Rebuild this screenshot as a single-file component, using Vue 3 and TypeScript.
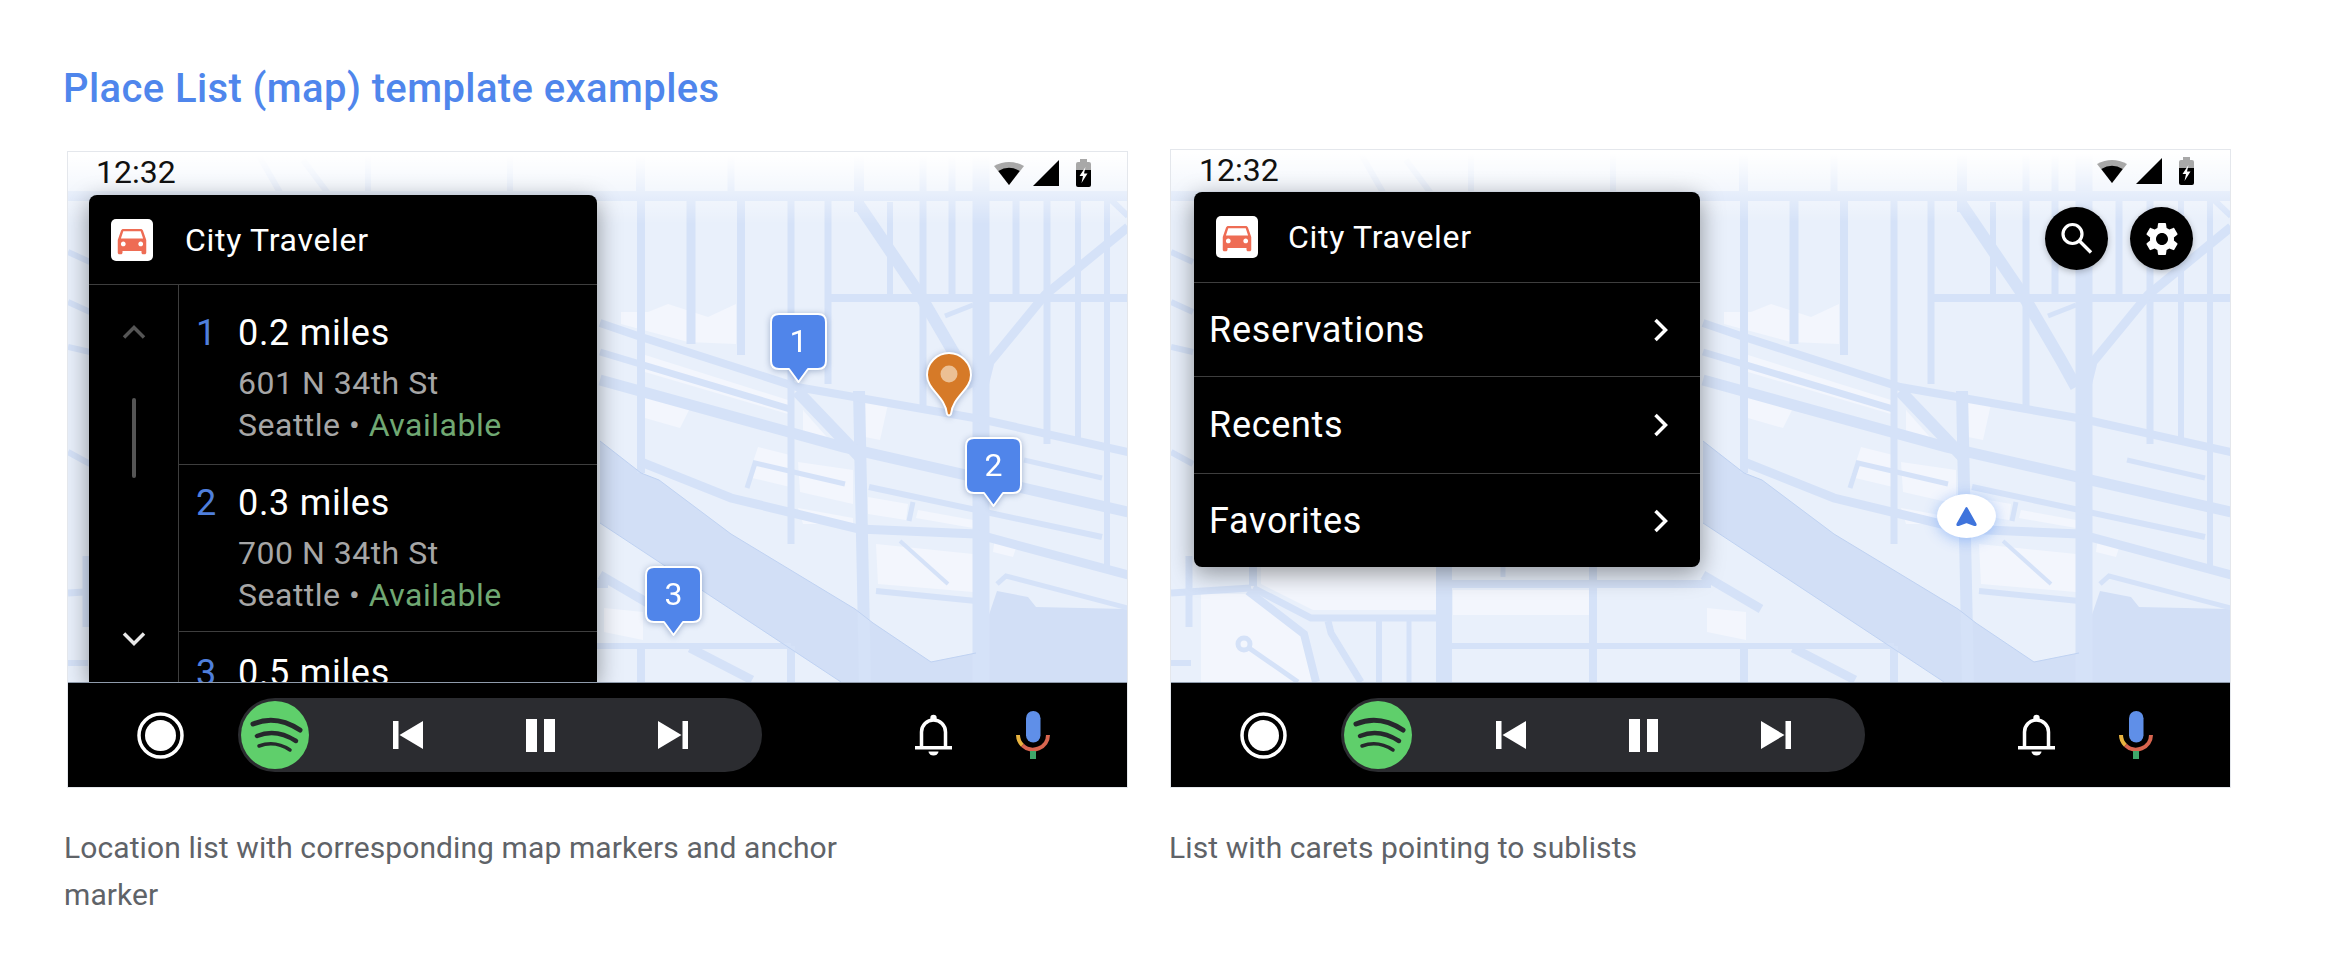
<script setup lang="ts">
interface Road {
  d: string
  w: number
}
interface Place {
  n: number
  dist: string
  addr: string
}
interface Marker {
  n: number
  x: number
  y: number
}

const GEAR =
  'M19.14 12.94c.04-.3.06-.61.06-.94 0-.32-.02-.64-.07-.94l2.03-1.58c.18-.14.23-.41.12-.61l-1.92-3.32c-.12-.22-.37-.29-.59-.22l-2.39.96c-.5-.38-1.03-.7-1.62-.94l-.36-2.54c-.04-.24-.24-.41-.48-.41h-3.84c-.24 0-.43.17-.47.41l-.36 2.54c-.59.24-1.13.57-1.62.94l-2.39-.96c-.22-.08-.47 0-.59.22L2.74 8.87c-.12.21-.08.47.12.61l2.03 1.58c-.05.3-.09.63-.09.94s.02.64.07.94l-2.03 1.58c-.18.14-.23.41-.12.61l1.92 3.32c.12.22.37.29.59.22l2.39-.96c.5.38 1.03.7 1.62.94l.36 2.54c.05.24.24.41.48.41h3.84c.24 0 .44-.17.47-.41l.36-2.54c.59-.24 1.13-.56 1.62-.94l2.39.96c.22.08.47 0 .59-.22l1.92-3.32c.12-.22.07-.47-.12-.61l-2.01-1.58zM12 15.6c-1.98 0-3.6-1.62-3.6-3.6s1.62-3.6 3.6-3.6 3.6 1.62 3.6 3.6-1.62 3.6-3.6 3.6z'
const CAR =
  'M18.92 6.01C18.72 5.42 18.16 5 17.5 5h-11c-.66 0-1.21.42-1.42 1.01L3 12v8c0 .55.45 1 1 1h1c.55 0 1-.45 1-1v-1h12v1c0 .55.45 1 1 1h1c.55 0 1-.45 1-1v-8l-2.08-5.99zM6.5 16c-.83 0-1.5-.67-1.5-1.5S5.67 13 6.5 13s1.5.67 1.5 1.5S7.33 16 6.5 16zm11 0c-.83 0-1.5-.67-1.5-1.5s.67-1.5 1.5-1.5 1.5.67 1.5 1.5-.67 1.5-1.5 1.5zM5 11l1.5-4.5h11L19 11H5z'

// map coordinates are screen pixels, the same map sits behind both screens
const water =
  '532,289 573,321 591,328 663,382 787,457 805,471 863,510 908,501 929,439 960,445 968,455 1060,457 1060,530 773,530 532,371'

const blocks = [
  '553,160 580,160 600,152 640,165 668,152 668,192 620,190 553,172',
  '577,203 720,248 720,262 577,220',
  '577,236 625,250 612,276 577,266',
  '735,258 765,292 735,285',
  '690,295 722,303 722,335 680,325',
  '730,310 785,318 785,352 732,340',
  '730,356 785,366 785,372 735,372',
  '808,392 905,402 905,440 810,432',
  '800,345 840,352 838,368 800,362',
  '850,358 905,368 905,376 848,366',
  '927,385 950,390 945,405 925,400',
  '797,248 820,252 812,288 797,285',
  '30,442 76,442 133,482 145,530 30,530',
  '90,415 265,415 265,458 142,458 90,432',
  '282,438 418,438 418,463 282,463',
  '536,456 575,460 575,488 536,480',
]

const roads: Road[] = [
  // verticals
  { d: 'M573 0V321', w: 8 },
  { d: 'M573 494V530', w: 8 },
  { d: 'M623 44V192', w: 9 },
  { d: 'M673 44V203', w: 8 },
  { d: 'M663 0V44', w: 7 },
  { d: 'M723 44V392', w: 7 },
  { d: 'M723 494V530', w: 8 },
  { d: 'M760 44V232', w: 7 },
  { d: 'M791 0V60', w: 10 },
  { d: 'M791 239L797 530', w: 12 },
  { d: 'M822 50V150', w: 6 },
  { d: 'M855 0V143M855 153V254', w: 7 },
  { d: 'M884 0V143', w: 7 },
  { d: 'M913 0V530', w: 17 },
  { d: 'M948 44V146', w: 7 },
  { d: 'M979 44V292', w: 7 },
  { d: 'M1010 44V289', w: 6 },
  { d: 'M1039 44V414', w: 6 },
  { d: 'M442 0V44M571 0V44M300 0V44', w: 6 },
  // horizontals
  { d: 'M0 44H1060', w: 10 },
  { d: 'M761 146H1060', w: 8 },
  { d: 'M273 494H723', w: 6 },
  { d: 'M273 432H540', w: 8 },
  // diagonals through the top right
  { d: 'M791 53L852 143L890 208L905 235', w: 12 },
  { d: 'M1060 75L977 143L922 210L913 246', w: 9 },
  { d: 'M1039 44L1060 64', w: 6 },
  { d: 'M877 164L905 153', w: 5 },
  { d: 'M235 8L262 44M190 2L214 44', w: 6 },
  // long streets across the map
  { d: 'M532 171L570 184L729 235L912 267L1060 300', w: 8 },
  { d: 'M532 200L722 257', w: 7 },
  { d: 'M532 228L775 295L1060 360', w: 11 },
  { d: 'M729 239L794 307', w: 12 },
  { d: 'M956 308L1034 326', w: 5 },
  { d: 'M801 335L1034 385', w: 6 },
  { d: 'M573 310L663 346L791 377L908 382L1060 423', w: 9 },
  { d: 'M845 350L841 369', w: 5 },
  { d: 'M679 336L687 311L777 332', w: 5 },
  { d: 'M929 432L938 424L1060 456', w: 5 },
  { d: 'M808 439L908 449', w: 6 },
  { d: 'M832 389L880 432', w: 4 },
  { d: 'M532 423L590 457M622 496L684 528', w: 9 },
  // bottom left, only seen below the short list
  { d: 'M82 404V434', w: 8 },
  { d: 'M18 404V475', w: 7 },
  { d: 'M0 441L80 436', w: 7 },
  { d: 'M82 436L140 466H265', w: 7 },
  { d: 'M77 439L133 482L145 530', w: 8 },
  { d: 'M157 469L160 481L190 530', w: 7 },
  { d: 'M208 466V530', w: 6 },
  { d: 'M238 466V530', w: 5 },
  { d: 'M273 404V530', w: 16 },
  { d: 'M422 404V530', w: 8 },
  { d: 'M332 404V425', w: 5 },
  { d: 'M78 496L127 530', w: 5 },
  { d: 'M0 511H20', w: 6 },
  { d: 'M0 100L22 110M0 150L22 160M0 195L22 200M0 300L22 312', w: 6 },
]

const places: Place[] = [
  { n: 1, dist: '0.2 miles', addr: '601 N 34th St' },
  { n: 2, dist: '0.3 miles', addr: '700 N 34th St' },
  { n: 3, dist: '0.5 miles', addr: '' },
]
const markers: Marker[] = [
  { n: 1, x: 702, y: 161 },
  { n: 2, x: 897, y: 285 },
  { n: 3, x: 577, y: 414 },
]
const sublists = ['Reservations', 'Recents', 'Favorites']

const examples = [
  { id: 'places', caption: 'Location list with corresponding map markers and anchor marker' },
  { id: 'carets', caption: 'List with carets pointing to sublists' },
]
</script>

<template>
  <main class="page">
    <h2 class="title">Place List (map) template examples</h2>
    <div class="examples">
      <figure v-for="ex in examples" :key="ex.id" class="example" :class="ex.id">
        <div class="screen">
          <div class="map">
            <svg class="roads" viewBox="0 0 1060 530" width="1060" height="530">
              <polygon :points="water" fill="#d2dff6" />
              <polygon v-for="b in blocks" :key="b" :points="b" fill="#f3f6fd" />
              <path
                v-for="r in roads"
                :key="r.d"
                :d="r.d"
                :stroke-width="r.w"
                fill="none"
                stroke="#d5e2f8"
              />
              <circle cx="73" cy="492" r="6" fill="none" stroke="#d5e2f8" stroke-width="5" />
              <path
                d="M532 289L573 321L591 328L663 382L787 457M532 371L773 530M787 457L805 471L863 510L908 501"
                fill="none"
                stroke="#bfd2f2"
                stroke-width="1"
              />
            </svg>
            <div class="scrim"></div>

            <div class="status">
              <span class="time">12:32</span>
              <svg class="wifi" viewBox="0 0 30 24" width="30" height="24">
                <path d="M0 5Q15 -3 30 5L15 24Z" fill="#a8a8a8" />
                <path d="M4.3 10Q15 3.5 25.7 10L15 24Z" fill="#000" />
              </svg>
              <svg class="signal" viewBox="0 0 26 26" width="26" height="26">
                <path d="M0 26L26 0V26Z" fill="#000" />
              </svg>
              <svg class="battery" viewBox="0 0 15 28" width="15" height="28">
                <path d="M4 0H11V3H13Q15 3 15 5V11H0V5Q0 3 2 3H4Z" fill="#a8a8a8" />
                <path d="M0 11H15V26Q15 28 13 28H2Q0 28 0 26Z" fill="#000" />
                <path d="M9.5 8L3.5 17H7L5.5 24L11.5 14.5H8Z" fill="#fff" />
              </svg>
            </div>

            <template v-if="ex.id === 'places'">
              <div v-for="m in markers" :key="m.n" class="marker" :style="{ left: m.x + 'px', top: m.y + 'px' }">
                <svg viewBox="0 0 57 71" width="57" height="71">
                  <path
                    d="M9 1H48Q56 1 56 9V48Q56 56 48 56H38L28.5 69L19 56H9Q1 56 1 48V9Q1 1 9 1Z"
                    fill="#5085ea"
                    stroke="#fff"
                    stroke-width="2"
                    stroke-linejoin="round"
                  />
                </svg>
                <span>{{ m.n }}</span>
              </div>
              <svg class="pin" viewBox="0 0 46 65" width="46" height="65">
                <path
                  d="M23 1C11 1 1 11 1 23C1 38 19 44 21 62Q23 65 25 62C27 44 45 38 45 23C45 11 35 1 23 1Z"
                  fill="#d67a28"
                  stroke="#fff"
                  stroke-width="2"
                />
                <circle cx="23" cy="22" r="8.5" fill="#ecc094" />
              </svg>

              <section class="panel">
                <header class="panel-head">
                  <span class="app-icon">
                    <svg viewBox="0 0 24 24" width="38" height="38"><path :d="CAR" fill="#ee6c54" /></svg>
                  </span>
                  <span class="app-name">City Traveler</span>
                </header>
                <div class="panel-body">
                  <div class="scroller">
                    <svg class="up" viewBox="0 0 24 14" width="24" height="14">
                      <path d="M2 12.5L12 2.5L22 12.5" fill="none" stroke="#555" stroke-width="3.5" />
                    </svg>
                    <div class="thumb"></div>
                    <svg class="down" viewBox="0 0 24 14" width="24" height="14">
                      <path d="M2 1.5L12 11.5L22 1.5" fill="none" stroke="#e8e8e8" stroke-width="3.5" />
                    </svg>
                  </div>
                  <ul class="place-list">
                    <li v-for="p in places" :key="p.n" class="place">
                      <span class="num">{{ p.n }}</span>
                      <div>
                        <div class="dist">{{ p.dist }}</div>
                        <template v-if="p.addr">
                          <div class="sub addr">{{ p.addr }}</div>
                          <div class="sub">Seattle • <span class="ok">Available</span></div>
                        </template>
                      </div>
                    </li>
                  </ul>
                </div>
              </section>
            </template>

            <template v-else>
              <div class="round-btn search">
                <svg viewBox="0 0 40 40" width="40" height="40">
                  <circle cx="15.5" cy="15" r="9.5" fill="none" stroke="#fff" stroke-width="3.2" />
                  <path d="M22.5 22L34 33.5" stroke="#fff" stroke-width="3.4" />
                </svg>
              </div>
              <div class="round-btn gear">
                <svg viewBox="0 0 24 24" width="40" height="40"><path :d="GEAR" fill="#fff" /></svg>
              </div>
              <div class="anchor">
                <svg viewBox="0 0 23 21" width="23" height="21">
                  <path d="M11.5 2L20.5 18Q21 19.5 19.5 19L11.5 16L3.5 19Q2 19.5 2.5 18Z" fill="#3f74dc" stroke="#3f74dc" stroke-width="2" stroke-linejoin="round" />
                </svg>
              </div>

              <section class="panel">
                <header class="panel-head">
                  <span class="app-icon">
                    <svg viewBox="0 0 24 24" width="38" height="38"><path :d="CAR" fill="#ee6c54" /></svg>
                  </span>
                  <span class="app-name">City Traveler</span>
                </header>
                <div v-for="s in sublists" :key="s" class="sublist">
                  <span>{{ s }}</span>
                  <svg viewBox="0 0 15 24" width="15" height="24">
                    <path d="M2.5 2L12.5 12L2.5 22" fill="none" stroke="#fff" stroke-width="3.5" />
                  </svg>
                </div>
              </section>
            </template>
          </div>

          <div class="bar">
            <svg class="home" viewBox="0 0 47 47" width="47" height="47">
              <circle cx="23.5" cy="23.5" r="21.5" fill="none" stroke="#fff" stroke-width="3.5" />
              <circle cx="23.5" cy="23.5" r="15.5" fill="#fff" />
            </svg>
            <div class="media">
              <svg class="spotify" viewBox="0 0 70 70" width="70" height="70">
                <circle cx="35" cy="35" r="34" fill="#5fcf6b" />
                <g fill="none" stroke="#26282c" stroke-linecap="round">
                  <path d="M13 24Q36 14 60 30" stroke-width="5" />
                  <path d="M17 36Q36 28 56 41" stroke-width="4.5" />
                  <path d="M19 46Q35 40 50 50" stroke-width="3.5" />
                </g>
              </svg>
              <div class="controls">
                <svg viewBox="0 0 30 28" width="30" height="28">
                  <path d="M0 0H5.5V28H0ZM30 0V28L6.5 14Z" fill="#fff" />
                </svg>
                <svg viewBox="0 0 29 33" width="29" height="33">
                  <path d="M0 0H11V33H0ZM18 0H29V33H18Z" fill="#fff" />
                </svg>
                <svg viewBox="0 0 30 28" width="30" height="28">
                  <path d="M30 0H24.5V28H30ZM0 0V28L23.5 14Z" fill="#fff" />
                </svg>
              </div>
            </div>
            <div class="bar-right">
              <svg viewBox="0 0 37 42" width="37" height="42">
                <circle cx="18.5" cy="4" r="3.2" fill="#fff" />
                <path d="M6.5 32V18A12 12 0 0 1 30.5 18V32" fill="none" stroke="#fff" stroke-width="3.5" />
                <path d="M0 32H37V35.5H0Z" fill="#fff" />
                <path d="M13.5 37.5H23.5A5 4 0 0 1 13.5 37.5Z" fill="#fff" />
              </svg>
              <svg viewBox="0 0 34 48" width="34" height="48">
                <rect x="10" y="0" width="14.5" height="31.5" rx="7.25" fill="#5f8fe8" />
                <path d="M2 24A15 14.5 0 0 0 6.4 34.25" fill="none" stroke="#e8b33f" stroke-width="4" />
                <path d="M6.4 34.25A15 14.5 0 0 0 32 24" fill="none" stroke="#d8654f" stroke-width="4" />
                <path d="M14 40H20V48H14Z" fill="#3fa66a" />
              </svg>
            </div>
          </div>
        </div>
        <figcaption class="caption">{{ ex.caption }}</figcaption>
      </figure>
    </div>
  </main>
</template>

<style>
html,
body {
  background: #fff;
}
</style>

<style scoped>
.page {
  width: 2338px;
  height: 966px;
  box-sizing: border-box;
  padding: 66px 0 0 63px;
  overflow: hidden;
  font-family: Roboto, 'Liberation Sans', sans-serif;
}
.title {
  margin: 0 0 38px;
  font-size: 40px;
  line-height: 46px;
  letter-spacing: 0.4px;
  font-weight: 500;
  color: #4f86ec;
}
.examples {
  display: grid;
  grid-template-columns: 1103px 1103px;
  align-items: start;
}
.example {
  margin: 0;
}
.screen {
  width: 1059px;
  height: 637px;
  margin-left: 5px;
  display: flex;
  flex-direction: column;
  outline: 1px solid #e4e7ec;
}
.places .screen {
  height: 635px;
  margin-top: 2px;
}
.caption {
  margin: 37px 0 0 1px;
  width: 790px;
  font-size: 30px;
  line-height: 47px;
  letter-spacing: 0.1px;
  color: #5f6368;
}
.carets .caption {
  margin-left: 3px;
}

.map {
  position: relative;
  flex: 1;
  overflow: hidden;
  background: #e9f0fb;
}
.roads {
  position: absolute;
  left: 0;
  bottom: 0;
  display: block;
}
.scrim {
  position: absolute;
  left: 0;
  right: 0;
  top: 0;
  height: 72px;
  background: linear-gradient(#fff 5%, rgba(255, 255, 255, 0));
}
.status {
  position: absolute;
  left: 28px;
  right: 36px;
  top: 3px;
  height: 36px;
  display: flex;
  align-items: center;
  color: #111;
}
.time {
  font-size: 32px;
  margin-right: auto;
  position: relative;
  top: -1px;
}
.wifi {
  margin-right: 9px;
}
.signal {
  margin-right: 17px;
}

.marker {
  position: absolute;
  width: 57px;
  height: 71px;
  filter: drop-shadow(0 1px 3px rgba(30, 60, 120, 0.35));
}
.marker svg {
  display: block;
}
.marker span {
  position: absolute;
  left: 0;
  right: 0;
  top: 8px;
  text-align: center;
  font-size: 32px;
  line-height: 40px;
  color: #fff;
}
.pin {
  position: absolute;
  left: 858px;
  top: 200px;
  filter: drop-shadow(0 1px 3px rgba(30, 60, 120, 0.35));
}

.panel {
  position: absolute;
  left: 21px;
  top: 43px;
  width: 508px;
  background: #000;
  border-radius: 8px 8px 0 0;
  box-shadow: 0 6px 24px rgba(0, 0, 0, 0.4);
  color: #fff;
}
.carets .panel {
  left: 23px;
  top: 42px;
  width: 506px;
  border-radius: 8px;
}
.panel-head {
  display: flex;
  align-items: center;
  height: 89px;
  padding-left: 22px;
  border-bottom: 1px solid #3e3e3e;
}
.carets .panel-head {
  height: 90px;
}
.app-icon {
  width: 42px;
  height: 42px;
  border-radius: 5px;
  background: #fff;
  display: flex;
  align-items: center;
  justify-content: center;
  margin-right: 32px;
}
.carets .app-icon {
  margin-right: 30px;
}
.app-name {
  font-size: 32px;
  letter-spacing: 0.7px;
}
.panel-body {
  display: flex;
  height: 397px;
  overflow: hidden;
}
.scroller {
  width: 89px;
  flex: none;
  border-right: 1px solid #3e3e3e;
  display: flex;
  flex-direction: column;
  align-items: center;
}
.up {
  margin-top: 40px;
}
.thumb {
  width: 4px;
  height: 80px;
  margin-top: 59px;
  border-radius: 2px;
  background: #555;
}
.down {
  margin-top: 154px;
}
.place-list {
  list-style: none;
  flex: 1;
  margin: 0;
  padding: 0;
}
.place {
  display: grid;
  grid-template-columns: 42px 1fr;
  padding: 13px 0 0 17px;
  height: 167px;
  box-sizing: border-box;
  border-bottom: 1px solid #3e3e3e;
}
.place:first-child {
  height: 180px;
  padding-top: 23px;
}
.place:last-child {
  padding-top: 16px;
  border-bottom: 0;
}
.num {
  font-size: 36px;
  line-height: 50px;
  color: #4f7fdc;
}
.dist {
  font-size: 36px;
  line-height: 50px;
  letter-spacing: 0.7px;
}
.sub {
  font-size: 32px;
  line-height: 42px;
  color: #a6a6a6;
  letter-spacing: 0.5px;
}
.addr {
  margin-top: 4px;
}
.ok {
  color: #70a973;
}

.sublist {
  display: flex;
  align-items: center;
  justify-content: space-between;
  height: 93px;
  padding: 0 32px 0 15px;
  font-size: 36px;
  letter-spacing: 0.7px;
  border-bottom: 1px solid #3e3e3e;
}
.sublist:nth-of-type(2) {
  height: 96px;
}
.sublist:last-child {
  border-bottom: 0;
}
.round-btn {
  position: absolute;
  top: 57px;
  width: 63px;
  height: 63px;
  border-radius: 50%;
  background: #000;
  display: flex;
  align-items: center;
  justify-content: center;
  box-shadow: 0 2px 6px rgba(0, 0, 0, 0.25);
}
.search {
  left: 874px;
}
.gear {
  left: 959px;
}
.anchor {
  position: absolute;
  left: 766px;
  top: 344px;
  width: 59px;
  height: 44px;
  border-radius: 50%;
  background: #fff;
  display: flex;
  align-items: center;
  justify-content: center;
  box-shadow: 0 2px 14px rgba(66, 133, 244, 0.45);
}

.bar {
  flex: none;
  position: relative;
  height: 105px;
  box-sizing: border-box;
  background: #000;
  border-top: 1px solid #8f9bab;
  display: flex;
  align-items: center;
  padding: 0 77px 0 69px;
}
.home {
  flex: none;
}
.media {
  margin-left: 54px;
  width: 524px;
  height: 74px;
  border-radius: 37px;
  background: #2b2c30;
  display: flex;
  align-items: center;
  padding-left: 2px;
  box-sizing: border-box;
}
.controls {
  display: flex;
  align-items: center;
  gap: 103px;
  margin-left: 83px;
}
.bar-right {
  margin-left: auto;
  display: flex;
  align-items: center;
  gap: 64px;
}
</style>
